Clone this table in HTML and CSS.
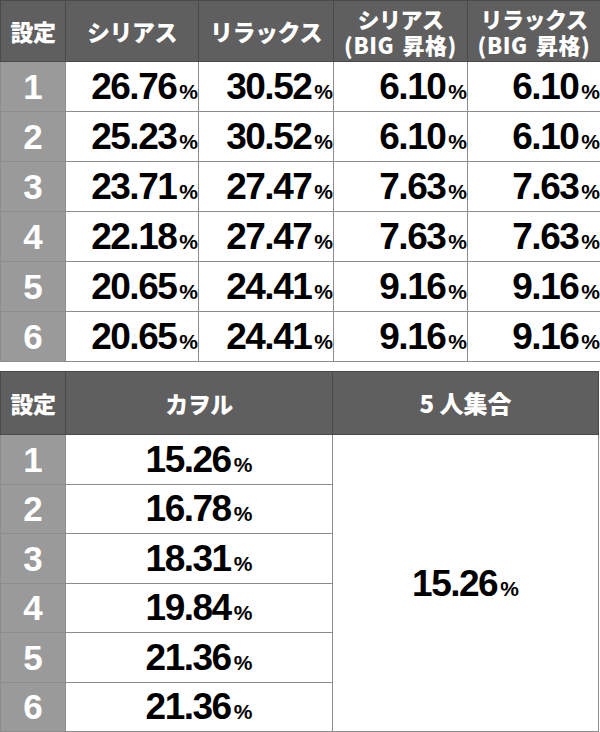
FILE: index.html
```html
<!DOCTYPE html>
<html lang="ja">
<head>
<meta charset="utf-8">
<link rel="stylesheet" href="styles.css">
</head>
<body>
<table class="tbl tbl-top">
  <colgroup>
    <col class="c-set"><col class="c-a"><col class="c-b"><col class="c-c"><col class="c-d">
  </colgroup>
  <thead>
    <tr class="hrow">
      <th>設定</th>
      <th>シリアス</th>
      <th>リラックス</th>
      <th class="two"><span class="ln">シリアス</span><span class="ln">(BIG 昇格)</span></th>
      <th class="two"><span class="ln">リラックス</span><span class="ln">(BIG 昇格)</span></th>
    </tr>
  </thead>
  <tbody>
    <tr><td class="set">1</td><td class="num">26.76<span class="pct">%</span></td><td class="num">30.52<span class="pct">%</span></td><td class="num">6.10<span class="pct">%</span></td><td class="num">6.10<span class="pct">%</span></td></tr>
    <tr><td class="set">2</td><td class="num">25.23<span class="pct">%</span></td><td class="num">30.52<span class="pct">%</span></td><td class="num">6.10<span class="pct">%</span></td><td class="num">6.10<span class="pct">%</span></td></tr>
    <tr><td class="set">3</td><td class="num">23.71<span class="pct">%</span></td><td class="num">27.47<span class="pct">%</span></td><td class="num">7.63<span class="pct">%</span></td><td class="num">7.63<span class="pct">%</span></td></tr>
    <tr><td class="set">4</td><td class="num">22.18<span class="pct">%</span></td><td class="num">27.47<span class="pct">%</span></td><td class="num">7.63<span class="pct">%</span></td><td class="num">7.63<span class="pct">%</span></td></tr>
    <tr><td class="set">5</td><td class="num">20.65<span class="pct">%</span></td><td class="num">24.41<span class="pct">%</span></td><td class="num">9.16<span class="pct">%</span></td><td class="num">9.16<span class="pct">%</span></td></tr>
    <tr><td class="set">6</td><td class="num">20.65<span class="pct">%</span></td><td class="num">24.41<span class="pct">%</span></td><td class="num">9.16<span class="pct">%</span></td><td class="num">9.16<span class="pct">%</span></td></tr>
  </tbody>
</table>

<table class="tbl tbl-bottom">
  <colgroup>
    <col class="c-set"><col class="c-k"><col class="c-g">
  </colgroup>
  <thead>
    <tr class="hrow">
      <th>設定</th>
      <th>カヲル</th>
      <th class="grp">5 人集合</th>
    </tr>
  </thead>
  <tbody>
    <tr><td class="set">1</td><td class="num ctr">15.26<span class="pct">%</span></td><td class="num ctr" rowspan="6">15.26<span class="pct">%</span></td></tr>
    <tr><td class="set">2</td><td class="num ctr">16.78<span class="pct">%</span></td></tr>
    <tr><td class="set">3</td><td class="num ctr">18.31<span class="pct">%</span></td></tr>
    <tr><td class="set">4</td><td class="num ctr">19.84<span class="pct">%</span></td></tr>
    <tr><td class="set">5</td><td class="num ctr">21.36<span class="pct">%</span></td></tr>
    <tr><td class="set">6</td><td class="num ctr">21.36<span class="pct">%</span></td></tr>
  </tbody>
</table>
</body>
</html>
```

FILE: styles.css
```css
html, body {
  margin: 0;
  padding: 0;
  background: #ffffff;
}

body {
  font-family: "Liberation Sans", "Noto Sans CJK JP", Arial, sans-serif;
  font-weight: 700;
}

.tbl {
  border-collapse: collapse;
  table-layout: fixed;
}

.tbl-top {
  width: 600px;
}

.tbl-bottom {
  width: 598px;
  margin-top: 9px;
}

.c-set { width: 65px; }
.c-a { width: 133px; }
.c-b { width: 135px; }
.c-c { width: 134px; }
.c-d { width: 133px; }
.c-k { width: 267px; }
.c-g { width: 266px; }

.tbl th,
.tbl td {
  padding: 0;
  border: 1px solid #8c8c8c;
}

.hrow th {
  background: #5f5f5f;
  color: #ffffff;
  font-family: "Noto Sans CJK JP", "Liberation Sans", sans-serif;
  font-weight: 900;
  font-size: 23px;
  line-height: 26px;
  text-align: center;
  border-color: #4a4a4a;
  letter-spacing: -0.5px;
}

.hrow th.grp {
  font-size: 24px;
  letter-spacing: 0;
}

.tbl-top .hrow th {
  height: 60px;
}

.tbl-bottom .hrow th {
  height: 62px;
}

.hrow th.two {
  font-size: 22px;
  letter-spacing: -0.5px;
}

.ln {
  display: block;
  line-height: 26px;
  white-space: nowrap;
}

.ln + .ln {
  word-spacing: 3px;
  letter-spacing: 0.5px;
}

.tbl-top tbody td {
  height: 49px;
}

.tbl-bottom tbody td {
  height: 48.5px;
}

.set {
  background: #9a9a9a;
  color: #ffffff;
  font-size: 35px;
  text-align: center;
  line-height: 1;
  padding-top: 3px;
}

.num {
  color: #000000;
  font-size: 37px;
  letter-spacing: -1.5px;
  text-align: right;
  padding-right: 10px;
  line-height: 1;
  padding-top: 5px;
  white-space: nowrap;
}

.num.ctr {
  text-align: center;
  padding-right: 0;
}

.pct {
  font-size: 21px;
  letter-spacing: 0;
  margin-left: 3px;
}
```
